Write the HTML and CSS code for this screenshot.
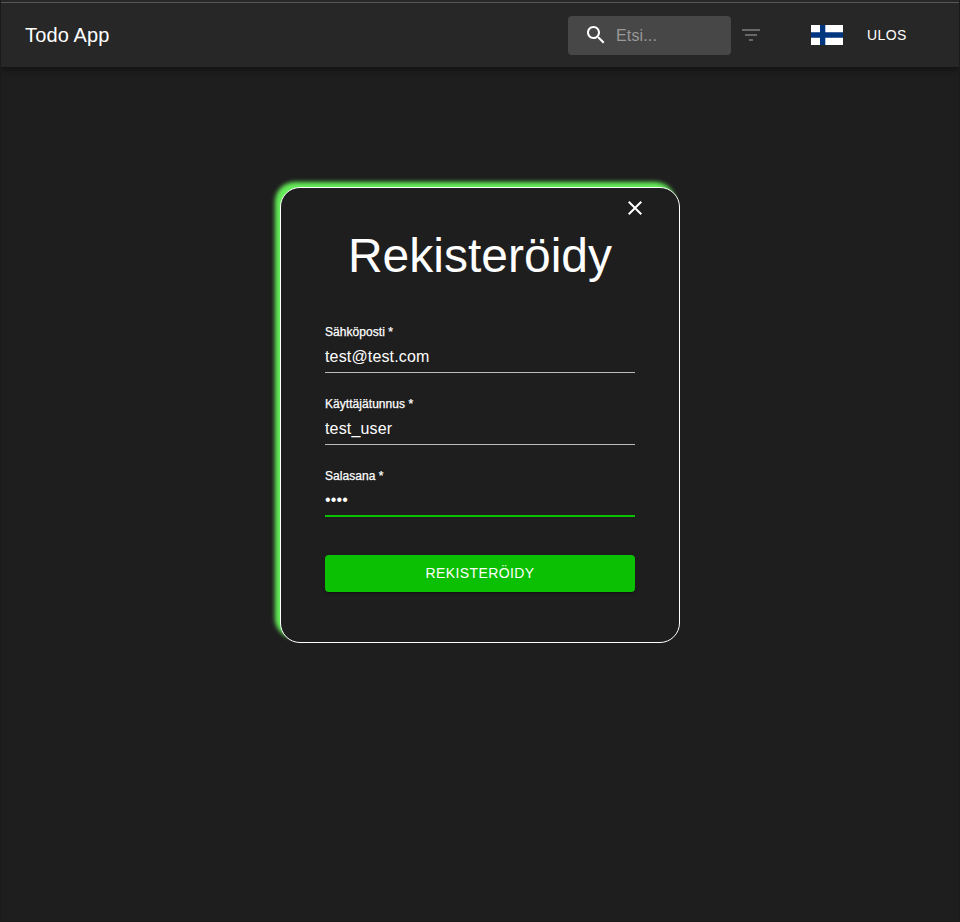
FILE: index.html
```html
<!DOCTYPE html>
<html lang="fi">
<head>
<meta charset="utf-8">
<title>Todo App</title>
<link rel="stylesheet" href="styles.css">
</head>
<body>
<header class="appbar">
  <div class="brand">Todo App</div>
  <label class="search">
    <svg class="search-icon" viewBox="0 0 24 24"><path d="M15.5 14h-.79l-.28-.27C15.41 12.59 16 11.11 16 9.5 16 5.91 13.09 3 9.5 3S3 5.91 3 9.5 5.91 16 9.5 16c1.61 0 3.09-.59 4.23-1.57l.27.28v.79l5 4.99L20.49 19l-4.99-5zm-6 0C7.01 14 5 11.99 5 9.5S7.01 5 9.5 5 14 7.01 14 9.5 11.99 14 9.5 14z"/></svg>
    <span class="search-text">Etsi...</span>
  </label>
  <svg class="filter-icon" viewBox="0 0 24 24"><path d="M10 18h4v-2h-4v2zM3 6v2h18V6H3zm3 7h12v-2H6v2z"/></svg>
  <svg class="flag" viewBox="0 0 32 20"><path fill="#fff" d="M0 0h32v20H0z"/><path fill="#003580" d="M0 7.3h32v5.4H0zM9 0h5.3v20H9z"/></svg>
  <div class="logout">ULOS</div>
</header>
<main class="card">
  <svg class="close" viewBox="0 0 24 24"><path d="M19 6.41L17.59 5 12 10.59 6.41 5 5 6.41 10.59 12 5 17.59 6.41 19 12 13.41 17.59 19 19 17.59 13.41 12z"/></svg>
  <h1 class="title">Rekisteröidy</h1>
  <div class="field">
    <div class="label">Sähköposti *</div>
    <div class="value">test@test.com</div>
  </div>
  <div class="field">
    <div class="label">Käyttäjätunnus *</div>
    <div class="value">test_user</div>
  </div>
  <div class="field focused">
    <div class="label">Salasana *</div>
    <div class="value password">••••</div>
  </div>
  <div class="submit">REKISTERÖIDY</div>
</main>
</body>
</html>
```
FILE: styles.css
```css
* { box-sizing: border-box; }
body {
  margin: 0;
  height: 922px;
  overflow: hidden;
  background: #1e1e1e;
  border: 1px solid #1a1a1a;
  border-top: 0;
  color: #fff;
  font-family: "Liberation Sans", Arial, sans-serif;
}
.appbar {
  display: flex;
  align-items: center;
  height: 67px;
  padding: 3px 24px 0;
  background: linear-gradient(#272727 2px, #575757 2px, #575757 3px, #272727 3px);
  box-shadow: 0 2px 4px -1px rgba(0,0,0,.2), 0 4px 5px rgba(0,0,0,.14), 0 1px 10px rgba(0,0,0,.12);
}
.brand {
  flex: 1;
  font-size: 20px;
  line-height: 32px;
  letter-spacing: .15px;
}
.search {
  display: flex;
  align-items: center;
  width: 163px;
  height: 39px;
  padding-left: 16px;
  border-radius: 4px;
  background: #474747;
}
.search-icon { width: 24px; height: 24px; fill: #fff; }
.search-text {
  margin-left: 8px;
  padding-top: 2px;
  font-size: 16px;
  letter-spacing: .15px;
  color: #999;
}
.filter-icon { width: 24px; height: 24px; margin-left: 8px; fill: #686868; }
.flag { width: 32px; height: 20px; margin-left: 48px; }
.logout {
  width: 68px;
  margin-left: 24px;
  font-size: 14px;
  line-height: 24px;
  letter-spacing: .4px;
}
.card {
  width: 400px;
  height: 456px;
  margin: 120px auto 0;
  padding: 8px 44px 0;
  border: 1px solid #fff;
  border-radius: 20px;
  background: #1e1e1e;
  box-shadow: -5px -5px 4px #65ed59;
}
.close {
  display: block;
  width: 24px;
  height: 24px;
  margin: 0 -12px 0 auto;
  fill: #fff;
}
.title {
  margin: 8px 0 0;
  font-size: 48px;
  font-weight: 400;
  line-height: 56px;
  text-align: center;
}
.field {
  height: 48px;
  margin-top: 24px;
  border-bottom: 1px solid #bcbcbc;
}
.title + .field { margin-top: 41px; }
.label {
  font-size: 12px;
  line-height: 14px;
  letter-spacing: .05px;
  -webkit-text-stroke: .25px #fff;
}
.value {
  margin-top: 6px;
  font-size: 16px;
  line-height: 23px;
  letter-spacing: .15px;
}
.password { margin-top: 5px; }
.focused { border-bottom: 2px solid #0bbf02; }
.submit {
  height: 37px;
  margin-top: 38px;
  border-radius: 4px;
  background: #0bbf02;
  box-shadow: 0 3px 1px -2px rgba(0,0,0,.2), 0 2px 2px rgba(0,0,0,.14), 0 1px 5px rgba(0,0,0,.12);
  font-size: 14px;
  line-height: 37px;
  letter-spacing: .4px;
  text-align: center;
}
```
